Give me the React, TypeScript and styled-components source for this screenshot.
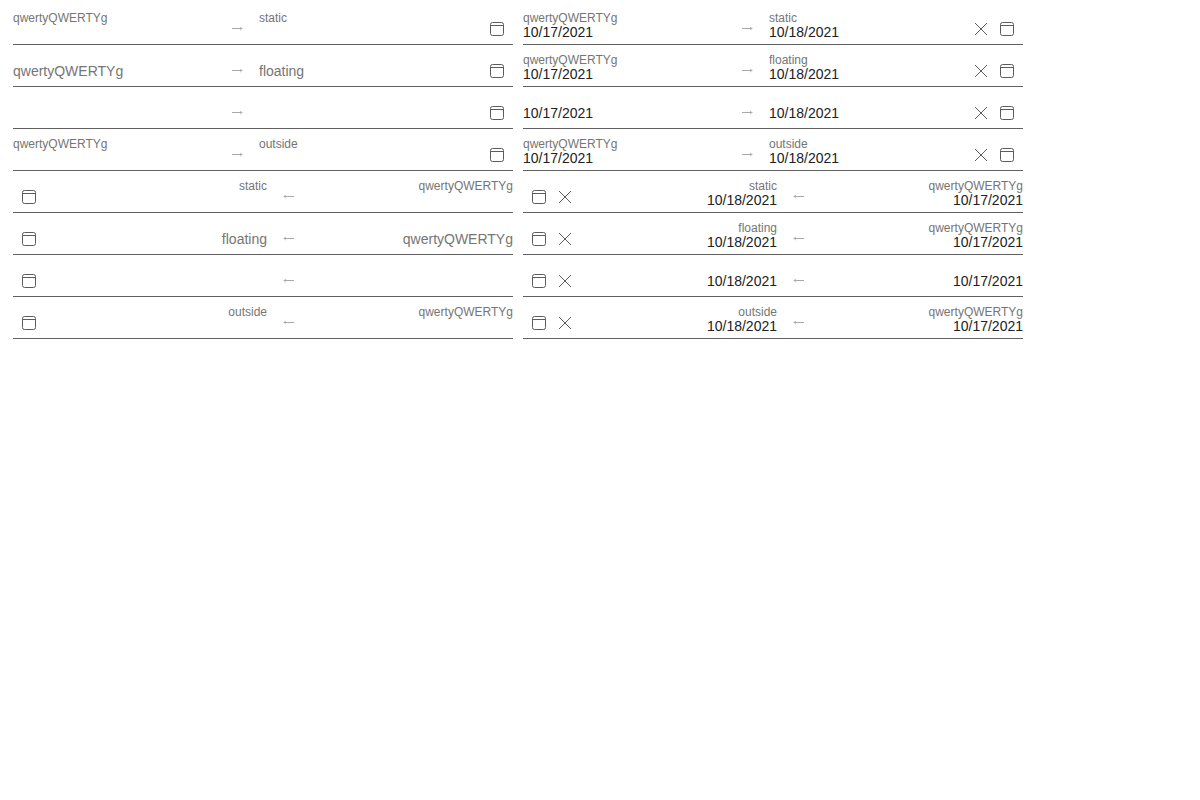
import React, { useId } from 'react';
import styled, { createGlobalStyle } from 'styled-components';

const GlobalStyle = createGlobalStyle`
  *, *::before, *::after { box-sizing: border-box; }
  body {
    margin: 0;
    background: #fff;
    font-family: "Liberation Sans", Arial, sans-serif;
  }
`;

const Page = styled.main`
  display: grid;
  grid-template-columns: repeat(2, minmax(0, 500px));
  gap: 10px;
  padding: 13px;
`;

const Field = styled.div`
  display: flex;
  height: 32px;
  border-bottom: 1px solid #616161;
`;

const Cell = styled.div<{ $centered: boolean }>`
  flex: 1;
  min-width: 0;
  display: flex;
  flex-direction: column;
  gap: 1px;
  justify-content: ${(p) => (p.$centered ? 'center' : 'flex-start')};
`;

const Label = styled.label`
  font-size: 12px;
  line-height: 10px;
  white-space: nowrap;
  color: #757575;
`;

const DateInput = styled.input`
  width: 100%;
  height: 16px;
  padding: 0;
  border: 0;
  outline: 0;
  background: transparent;
  font-family: inherit;
  font-size: 14px;
  line-height: 16px;
  color: #212121;
  &::placeholder {
    color: #757575;
    opacity: 1;
  }
`;

const Separator = styled.div<{ $rtl: boolean }>`
  flex: none;
  width: 44px;
  display: flex;
  align-items: center;
  justify-content: center;
  svg {
    transform: ${(p) => (p.$rtl ? 'scaleX(-1)' : 'none')};
  }
`;

const Actions = styled.div`
  flex: none;
  width: 52px;
  display: flex;
  justify-content: flex-end;
`;

const IconButton = styled.button<{ $width: number }>`
  width: ${(p) => p.$width}px;
  display: flex;
  align-items: center;
  justify-content: center;
  padding: 1px 0 0;
  border: 0;
  background: transparent;
  color: #5c5c5c;
  cursor: pointer;
  svg { flex: none; }
`;

const ArrowIcon = () => (
  <svg width="12" height="5" viewBox="0 0 12 5" fill="none" stroke="#a8a8a8" aria-hidden="true">
    <path d="M1 2.5H11.3" />
    <path d="M9.2 0.9L10.8 2.5L9.2 4.1" />
  </svg>
);

const ClearIcon = () => (
  <svg width="14" height="14" viewBox="0 0 14 14" fill="none" stroke="currentColor" aria-hidden="true">
    <path d="M1 1L13 13M13 1L1 13" />
  </svg>
);

const CalendarIcon = () => (
  <svg width="14" height="14" viewBox="0 0 14 14" fill="none" stroke="currentColor" aria-hidden="true">
    <rect x="0.5" y="0.5" width="13" height="13" rx="2" />
    <path d="M1 3.5H13" />
  </svg>
);

type LabelMode = 'static' | 'floating' | 'hidden' | 'outside';

interface DatePartProps {
  mode: LabelMode;
  label: string;
  value: string;
}

function DatePart({ mode, label, value }: DatePartProps) {
  const id = useId();
  const resting = mode === 'floating' && !value;
  const labelled = mode !== 'hidden' && !resting;
  return (
    <Cell $centered={!labelled}>
      {labelled && <Label htmlFor={id}>{label}</Label>}
      <DateInput
        id={id}
        type="text"
        defaultValue={value}
        placeholder={resting ? label : undefined}
        aria-label={labelled ? undefined : label}
      />
    </Cell>
  );
}

interface DateRangeProps {
  mode: LabelMode;
  rtl: boolean;
  filled: boolean;
}

function DateRange({ mode, rtl, filled }: DateRangeProps) {
  return (
    <Field dir={rtl ? 'rtl' : 'ltr'}>
      <DatePart mode={mode} label="qwertyQWERTYg" value={filled ? '10/17/2021' : ''} />
      <Separator $rtl={rtl}>
        <ArrowIcon />
      </Separator>
      <DatePart mode={mode} label={mode} value={filled ? '10/18/2021' : ''} />
      <Actions>
        {filled && (
          <IconButton $width={20} type="button" aria-label="Clear">
            <ClearIcon />
          </IconButton>
        )}
        <IconButton $width={32} type="button" aria-label="Open calendar">
          <CalendarIcon />
        </IconButton>
      </Actions>
    </Field>
  );
}

const modes: LabelMode[] = ['static', 'floating', 'hidden', 'outside'];

export default function App() {
  return (
    <>
      <GlobalStyle />
      <Page>
        {[false, true].map((rtl) =>
          modes.map((mode) =>
            [false, true].map((filled) => (
              <DateRange key={`${rtl}-${mode}-${filled}`} mode={mode} rtl={rtl} filled={filled} />
            )),
          ),
        )}
      </Page>
    </>
  );
}
